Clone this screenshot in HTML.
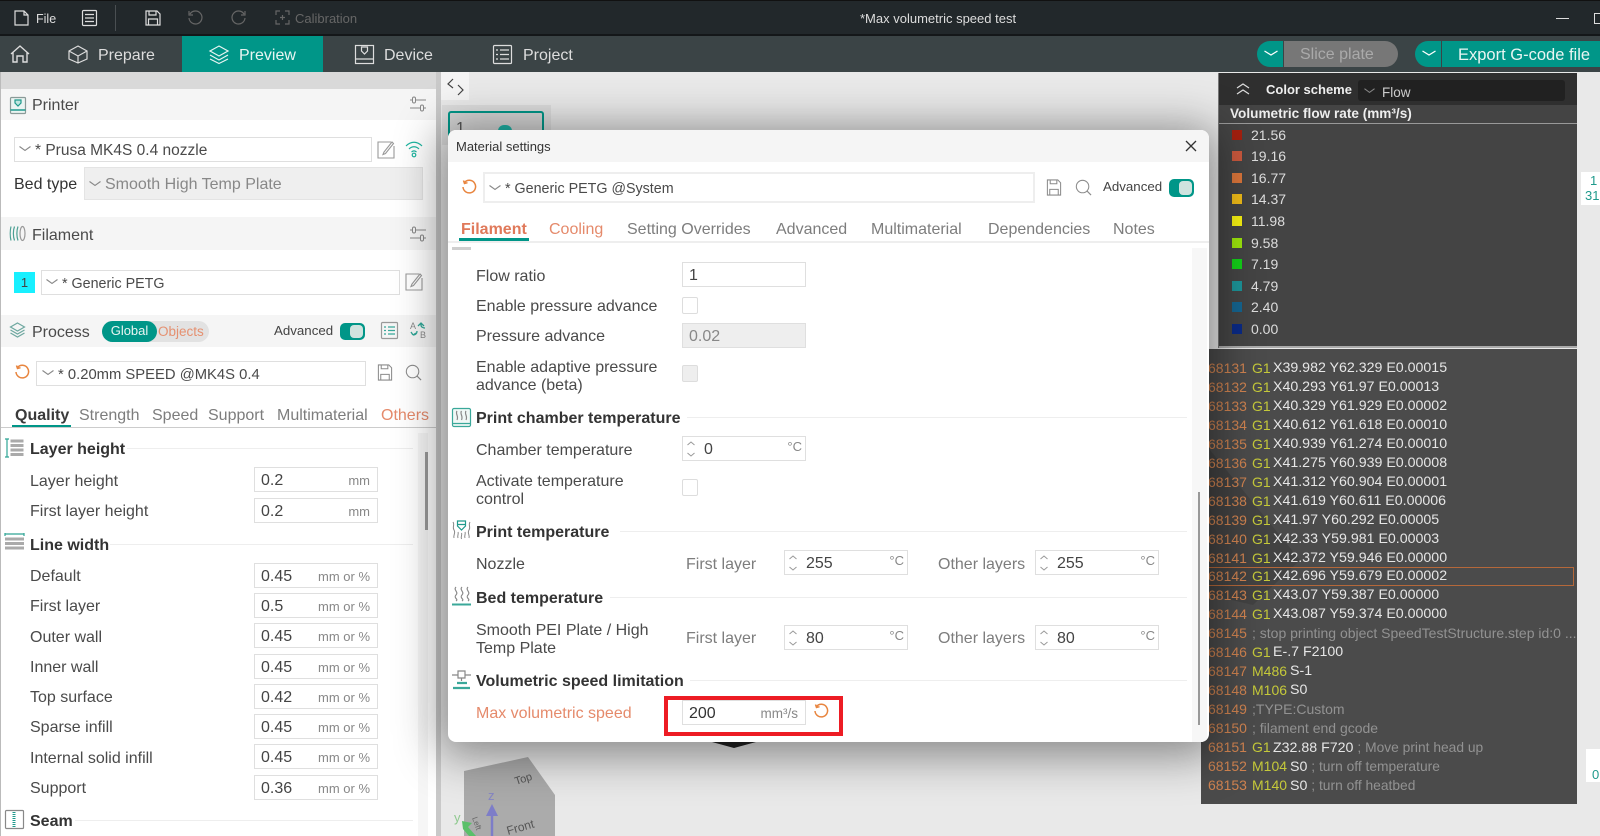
<!DOCTYPE html>
<html><head><meta charset="utf-8"><title>Max volumetric speed test</title>
<style>
html,body{margin:0;padding:0;width:1600px;height:836px;overflow:hidden;background:#e9e9e9;font-family:"Liberation Sans",sans-serif;color:#4a4a4a}
body{filter:blur(.3px)}
div,span,svg{position:absolute}
.t{white-space:nowrap;line-height:20px;font-size:16px;margin-top:1.5px}
.b{font-weight:bold;color:#333;font-size:16px}
.i{border:1px solid #dfdfdf;background:#fff;box-sizing:border-box;height:25px;width:124px}
.v{left:6px;top:3px;line-height:20px;font-size:16px;color:#444}
.u{right:7px;top:3px;line-height:20px;font-size:13px;color:#888;white-space:nowrap}
.d{right:3px;top:0}
.l{height:1px;background:#eee}
.n{left:1208px;color:#d08350}.g{left:1252px;color:#c5c93a}.w{color:#e6e6e6}.c{color:#929292;font-size:13.800px}
.r{font-size:14px;line-height:19px;white-space:nowrap}
.w{font-size:14.200px}
.s{left:1232px;width:10px;height:10px}
.q{left:1251px;color:#ddd;font-size:14px;line-height:20px;margin-top:0}
svg.o{fill:none;stroke:#8b8b8b;stroke-width:1.2;overflow:visible}
</style></head><body>
<svg width="0" height="0" style="left:0;top:0"><defs>
<symbol id="undo" viewBox="0 0 16 16"><path d="M3.500 3.500A6.300 6.300 0 1 1 2 8M2.500 1.500l1 3 3-.8" fill="none" stroke="#e8853f" stroke-width="1.500"/></symbol>
<symbol id="save" viewBox="0 0 16 18"><path d="M1 1h11l3 3v13H1zM4 1v4h7V1M3.500 17v-6h9v6" fill="none" stroke="#8b8b8b" stroke-width="1.100"/></symbol>
<symbol id="srch" viewBox="0 0 18 18"><circle cx="8" cy="8" r="6.600" fill="none" stroke="#8b8b8b" stroke-width="1.100"/><path d="M12.500 12.500l4.500 4.500" stroke="#8b8b8b" stroke-width="1.200"/></symbol>
<symbol id="edit" viewBox="0 0 18 18"><path d="M14 1H1v16h16V5M7 11l-1 2.500L8.500 12.500 16.500 2.500 15 1z" fill="none" stroke="#999" stroke-width="1.100"/></symbol>
<symbol id="sld" viewBox="0 0 16 16"><path d="M0 4h2M6 4h10M0 12h10M14 12h2" stroke="#888" fill="none"/><rect x="2.500" y="1" width="3" height="6" rx="1.500" fill="none" stroke="#888"/><rect x="10.500" y="9" width="3" height="6" rx="1.500" fill="none" stroke="#888"/></symbol>
<symbol id="chv" viewBox="0 0 12 6"><path d="M.5.500l5.500 4 5.500-4" fill="none" stroke="#888" stroke-width="1.100"/></symbol>
<symbol id="spin" viewBox="0 0 10 18"><path d="M1.500 5l3.500-3 3.500 3M1.500 13l3.500 3 3.500-3" fill="none" stroke="#999"/></symbol>
</defs></svg>

<!-- canvas -->
<div style="left:441px;top:72px;width:1159px;height:764px;background:#e9e9e9"></div>
<div style="left:441px;top:72px;width:28px;height:28px;background:#f4f4f4"></div>
<svg class="o" style="left:446px;top:77px;stroke:#444" width="18" height="20"><path d="M7 2L2 7l5 4M12 8l5 5-5 5"/></svg>
<div style="left:442px;top:105px;width:109px;height:40px;background:#dcdcdc"></div>
<div style="left:448px;top:111px;width:96px;height:30px;background:#d5d5d5;border:2px solid #009688;box-sizing:border-box;border-radius:3px"></div>
<div class="t" style="left:456px;top:117px;color:#555">1</div>
<div style="left:498px;top:125px;width:14px;height:8px;background:#1fb5a8;border-radius:6px 6px 0 0"></div>
<svg style="left:1205px;top:445px" width="120" height="170"><path d="M5 5L95 115 48 160 5 150z" fill="#222"/></svg>
<div style="left:712px;top:742px;width:0;height:0;border-left:22px solid transparent;border-right:22px solid transparent;border-top:6px solid #222"></div>
<svg style="left:441px;top:750px" width="130" height="86"><path d="M23 21L87 7 114 45V86H23z" fill="#ababab"/>
<text x="75" y="35" font-size="11" fill="#555" font-family="Liberation Sans" transform="rotate(-18 75 35)">Top</text>
<text x="67" y="85" font-size="12" fill="#555" font-family="Liberation Sans" transform="rotate(-16 67 85)">Front</text>
<text x="47" y="50" font-size="13" fill="#8585c5" font-family="Liberation Sans">z</text>
<text x="13" y="72" font-size="13" fill="#8fc98f" font-family="Liberation Sans">y</text>
<text x="31" y="68" font-size="8" fill="#666" font-family="Liberation Sans" transform="rotate(70 31 68)">Left</text>
<path d="M51 86V58" stroke="#7d7dc8" stroke-width="2.500"/><path d="M45 66l6-12 6 12z" fill="#7d7dc8"/>
<path d="M21 71l10 2-4 4 8 9h-7l-6-7z" fill="#5bc06a"/></svg>
<div style="left:1581px;top:172px;width:19px;height:33px;background:#fff"></div>
<div class="t" style="left:1590px;top:169px;color:#1f9a8c;font-size:13px">1</div>
<div class="t" style="left:1585px;top:184px;color:#1f9a8c;font-size:13px">31</div>
<div style="left:1586px;top:749px;width:14px;height:33px;background:#fff"></div>
<div class="t" style="left:1592px;top:763px;color:#1f9a8c;font-size:13px">0</div>

<!-- color scheme -->
<div style="left:1219px;top:73px;width:358px;height:32px;background:#2f2f2f"></div>
<div style="left:1219px;top:105px;width:358px;height:242px;background:#444"></div>
<div style="left:1219px;top:123px;width:358px;height:1px;background:#999"></div>
<div style="left:1219px;top:346px;width:358px;height:2px;background:#aaa"></div>
<div style="left:1218px;top:73px;width:1px;height:275px;background:#777"></div>
<svg class="o" style="left:1236px;top:83px;stroke:#ddd" width="14" height="12"><path d="M1 5l6-4 6 4M1 11l6-4 6 4"/></svg>
<div class="t" style="left:1266px;top:78px;font-weight:bold;color:#eee;font-size:13px">Color scheme</div>
<div style="left:1358px;top:80px;width:207px;height:21px;background:#212121;border-radius:3px"></div>
<svg style="left:1364px;top:88px" width="11" height="6"><use href="#chv"/></svg>
<div class="t" style="left:1382px;top:81px;color:#ccc;font-size:13.500px">Flow</div>
<div class="t" style="left:1230px;top:102px;font-weight:bold;color:#eee;font-size:13.600px">Volumetric flow rate (mm³/s)</div>
<div class="s" style="top:130px;background:#a3200f"></div><div class="t q" style="top:125px">21.56</div>
<div class="s" style="top:151px;background:#c9583d"></div><div class="t q" style="top:146px">19.16</div>
<div class="s" style="top:173px;background:#d8743a"></div><div class="t q" style="top:168px">16.77</div>
<div class="s" style="top:194px;background:#eeba18"></div><div class="t q" style="top:189px">14.37</div>
<div class="s" style="top:216px;background:#f5f012"></div><div class="t q" style="top:211px">11.98</div>
<div class="s" style="top:238px;background:#9be40c"></div><div class="t q" style="top:233px">9.58</div>
<div class="s" style="top:259px;background:#13cf18"></div><div class="t q" style="top:254px">7.19</div>
<div class="s" style="top:281px;background:#1c9398"></div><div class="t q" style="top:276px">4.79</div>
<div class="s" style="top:302px;background:#15648f"></div><div class="t q" style="top:297px">2.40</div>
<div class="s" style="top:324px;background:#0a2a85"></div><div class="t q" style="top:319px">0.00</div>

<!-- gcode -->
<div style="left:1201px;top:349px;width:376px;height:455px;background:rgba(68,68,68,.96)"></div>
<div style="left:1204px;top:567px;width:370px;height:19px;border:1px solid #b5683a;box-sizing:border-box"></div>
<div class="r n" style="top:359px">68131</div><div class="r g" style="top:359px">G1</div><div class="r w" style="left:1273px;top:359px">X39.982 Y62.329 E0.00015</div>
<div class="r n" style="top:378px">68132</div><div class="r g" style="top:378px">G1</div><div class="r w" style="left:1273px;top:378px">X40.293 Y61.97 E0.00013</div>
<div class="r n" style="top:397px">68133</div><div class="r g" style="top:397px">G1</div><div class="r w" style="left:1273px;top:397px">X40.329 Y61.929 E0.00002</div>
<div class="r n" style="top:416px">68134</div><div class="r g" style="top:416px">G1</div><div class="r w" style="left:1273px;top:416px">X40.612 Y61.618 E0.00010</div>
<div class="r n" style="top:435px">68135</div><div class="r g" style="top:435px">G1</div><div class="r w" style="left:1273px;top:435px">X40.939 Y61.274 E0.00010</div>
<div class="r n" style="top:454px">68136</div><div class="r g" style="top:454px">G1</div><div class="r w" style="left:1273px;top:454px">X41.275 Y60.939 E0.00008</div>
<div class="r n" style="top:473px">68137</div><div class="r g" style="top:473px">G1</div><div class="r w" style="left:1273px;top:473px">X41.312 Y60.904 E0.00001</div>
<div class="r n" style="top:492px">68138</div><div class="r g" style="top:492px">G1</div><div class="r w" style="left:1273px;top:492px">X41.619 Y60.611 E0.00006</div>
<div class="r n" style="top:511px">68139</div><div class="r g" style="top:511px">G1</div><div class="r w" style="left:1273px;top:511px">X41.97 Y60.292 E0.00005</div>
<div class="r n" style="top:530px">68140</div><div class="r g" style="top:530px">G1</div><div class="r w" style="left:1273px;top:530px">X42.33 Y59.981 E0.00003</div>
<div class="r n" style="top:549px">68141</div><div class="r g" style="top:549px">G1</div><div class="r w" style="left:1273px;top:549px">X42.372 Y59.946 E0.00000</div>
<div class="r n" style="top:567px">68142</div><div class="r g" style="top:567px">G1</div><div class="r w" style="left:1273px;top:567px">X42.696 Y59.679 E0.00002</div>
<div class="r n" style="top:586px">68143</div><div class="r g" style="top:586px">G1</div><div class="r w" style="left:1273px;top:586px">X43.07 Y59.387 E0.00000</div>
<div class="r n" style="top:605px">68144</div><div class="r g" style="top:605px">G1</div><div class="r w" style="left:1273px;top:605px">X43.087 Y59.374 E0.00000</div>
<div class="r n" style="top:624px">68145</div><div class="r c" style="left:1252px;top:624px">; stop printing object SpeedTestStructure.step id:0 ...</div>
<div class="r n" style="top:643px">68146</div><div class="r g" style="top:643px">G1</div><div class="r w" style="left:1273px;top:643px">E-.7 F2100</div>
<div class="r n" style="top:662px">68147</div><div class="r g" style="top:662px">M486</div><div class="r w" style="left:1290px;top:662px">S-1</div>
<div class="r n" style="top:681px">68148</div><div class="r g" style="top:681px">M106</div><div class="r w" style="left:1290px;top:681px">S0</div>
<div class="r n" style="top:700px">68149</div><div class="r c" style="left:1252px;top:700px">;TYPE:Custom</div>
<div class="r n" style="top:719px">68150</div><div class="r c" style="left:1252px;top:719px">; filament end gcode</div>
<div class="r n" style="top:738px">68151</div><div class="r g" style="top:738px">G1</div><div class="r w" style="left:1273px;top:738px">Z32.88 F720 <span class="c" style="position:static">; Move print head up</span></div>
<div class="r n" style="top:757px">68152</div><div class="r g" style="top:757px">M104</div><div class="r w" style="left:1290px;top:757px">S0 <span class="c" style="position:static">; turn off temperature</span></div>
<div class="r n" style="top:776px">68153</div><div class="r g" style="top:776px">M140</div><div class="r w" style="left:1290px;top:776px">S0 <span class="c" style="position:static">; turn off heatbed</span></div>

<!-- left panel -->
<div style="left:0;top:72px;width:436px;height:764px;background:#fff"></div>
<div style="left:436px;top:72px;width:5px;height:764px;background:#c9c9c9"></div>
<div style="left:0;top:72px;width:1px;height:764px;background:#bbb"></div>
<div style="left:1px;top:72px;width:435px;height:17px;background:#d9d9d9"></div>
<div style="left:1px;top:89px;width:435px;height:31px;background:#f5f5f5"></div>
<svg class="o" style="left:10px;top:97px;stroke:#8a9a98" width="16" height="17"><rect x=".5" y=".5" width="15" height="16" rx="1" fill="#eaf4f2"/><path d="M5 3h6v3l-3 3-3-3z" stroke="#1f9a8c" fill="#bfe6e0"/><path d="M.5 13h15" stroke="#1f9a8c" stroke-width="1.500"/></svg>
<div class="t" style="left:32px;top:94px">Printer</div>
<svg style="left:410px;top:96px" width="16" height="16"><use href="#sld"/></svg>
<div class="i" style="left:14px;top:137px;width:358px"></div>
<svg style="left:19px;top:146px" width="12" height="6"><use href="#chv"/></svg>
<div class="t" style="left:35px;top:139px;font-size:15.500px">* Prusa MK4S 0.4 nozzle</div>
<svg style="left:377px;top:141px" width="18" height="18"><use href="#edit"/></svg>
<svg class="o" style="left:405px;top:141px;stroke:#1fb5a0" width="18" height="17"><path d="M1 5c5-5 11-5 16 0M4 8c3-3 7-3 10 0M6.500 11c2-1.500 3-1.500 5 0"/><circle cx="9" cy="14" r="1.800"/></svg>
<div class="t" style="left:14px;top:173px;color:#333">Bed type</div>
<div style="left:84px;top:167px;width:339px;height:33px;background:#efefef;border:1px solid #e4e4e4;box-sizing:border-box"></div>
<svg style="left:89px;top:181px" width="12" height="6"><use href="#chv"/></svg>
<div class="t" style="left:105px;top:173px;color:#888">Smooth High Temp Plate</div>
<div style="left:1px;top:217px;width:435px;height:33px;background:#f5f5f5"></div>
<svg class="o" style="left:10px;top:225px;stroke:#4b9f93" width="16" height="17"><path d="M1 1.500c-1 4-1 10 0 14M4.500 1.500c-1.500 4-1.500 10 0 14M8 1.500c-1.500 4-1.500 10 0 14" /><ellipse cx="12.500" cy="8.500" rx="2.500" ry="7" stroke="#999"/></svg>
<div class="t" style="left:32px;top:224px">Filament</div>
<svg style="left:410px;top:226px" width="16" height="16"><use href="#sld"/></svg>
<div style="left:14px;top:272px;width:21px;height:21px;background:#18f0ff;text-align:center;line-height:21px;font-size:13px;color:#444">1</div>
<div class="i" style="left:41px;top:270px;width:359px"></div>
<svg style="left:46px;top:279px" width="12" height="6"><use href="#chv"/></svg>
<div class="t" style="left:62px;top:272px;font-size:14.300px">* Generic PETG</div>
<svg style="left:405px;top:273px" width="18" height="18"><use href="#edit"/></svg>
<div style="left:1px;top:315px;width:435px;height:32px;background:#f5f5f5"></div>
<svg class="o" style="left:9px;top:322px;stroke:#6fa8a0" width="17" height="15"><path d="M8.500 1l7 4-7 4-7-4zM1.500 8l7 4 7-4M1.500 11l7 4 7-4"/></svg>
<div class="t" style="left:32px;top:321px">Process</div>
<div style="left:102px;top:321px;width:107px;height:21px;background:#e2e2e2;border-radius:11px"></div>
<div style="left:102px;top:321px;width:55px;height:21px;background:#009688;border-radius:11px;color:#e8f5f2;text-align:center;font-size:13px;line-height:20px">Global</div>
<div class="t" style="left:158px;top:320px;color:#e59070;font-size:13.500px">Objects</div>
<div class="t" style="left:274px;top:319px;font-size:13.300px;color:#444">Advanced</div>
<div style="left:340px;top:323px;width:25px;height:17px;background:#009688;border-radius:5px"></div>
<div style="left:350px;top:325px;width:13px;height:13px;background:#cfe3df;border-radius:4px"></div>
<svg class="o" style="left:381px;top:322px;stroke:#999" width="17" height="17"><rect x=".5" y=".5" width="16" height="16" rx="1"/><path d="M3 5h2M7 5h7M3 8.500h2M7 8.500h7M3 12h2M7 12h7" stroke="#3aa89a"/></svg>
<svg style="left:410px;top:321px" width="17" height="18"><text x="0" y="8" font-size="9" fill="#888" font-family="Liberation Sans">A</text><text x="10" y="17" font-size="9" fill="#888" font-family="Liberation Sans">B</text><path d="M8 5l3-3 3 3M11 2v2c0 2 2 3 4 3M1 11l2 3M3 14l3-2M3 14c3 0 4-2 4-4" fill="none" stroke="#2ea595" stroke-width="1.300"/></svg>
<svg style="left:14px;top:364px" width="16" height="16"><use href="#undo"/></svg>
<div class="i" style="left:36px;top:361px;width:330px"></div>
<svg style="left:42px;top:370px" width="12" height="6"><use href="#chv"/></svg>
<div class="t" style="left:58px;top:363px;font-size:14.800px">* 0.20mm SPEED @MK4S 0.4</div>
<svg style="left:377px;top:364px" width="16" height="17"><use href="#save"/></svg>
<svg style="left:405px;top:364px" width="17" height="17"><use href="#srch"/></svg>
<div class="t" style="left:15px;top:404px;font-weight:bold;color:#3a3a3a">Quality</div>
<div class="t" style="left:79px;top:404px;color:#7d7d7d">Strength</div>
<div class="t" style="left:152px;top:404px;color:#7d7d7d">Speed</div>
<div class="t" style="left:208px;top:404px;color:#7d7d7d">Support</div>
<div class="t" style="left:277px;top:404px;color:#7d7d7d">Multimaterial</div>
<div class="t" style="left:381px;top:404px;color:#e58a6b">Others</div>
<div style="left:1px;top:427px;width:435px;height:1px;background:#ccc"></div>
<div style="left:12px;top:425px;width:59px;height:2px;background:#009688"></div>
<div style="left:418px;top:433px;width:10px;height:403px;background:#f6f6f6"></div>
<div style="left:425px;top:452px;width:3px;height:78px;background:#9a9a9a"></div>

<svg class="o" style="left:5px;top:438px" width="20" height="20"><path d="M2 1v18M0 1h4M0 19h4" stroke="#2ea595"/><rect x="5" y="1" width="14" height="18" fill="#fff" stroke="none"/><path d="M5.500 3h13M5.500 7.500h13M5.500 12h13M5.500 16.500h13" stroke="#aaa" stroke-width="3"/></svg>
<div class="t b" style="left:30px;top:438px">Layer height</div><div class="l" style="left:127px;top:448px;width:286px"></div>
<div class="t" style="left:30px;top:470px">Layer height</div><div class="i" style="left:254px;top:467px"><span class="v">0.2</span><span class="u">mm</span></div>
<div class="t" style="left:30px;top:500px">First layer height</div><div class="i" style="left:254px;top:498px"><span class="v">0.2</span><span class="u">mm</span></div>
<svg class="o" style="left:5px;top:533px" width="20" height="20"><path d="M0 1h19M0 0v3M19 0v3" stroke="#2ea595" stroke-width="1.200"/><path d="M0 6h19M0 10.500h19M0 15h19" stroke="#aaa" stroke-width="3"/></svg>
<div class="t b" style="left:30px;top:534px">Line width</div><div class="l" style="left:110px;top:544px;width:303px"></div>
<div class="t" style="left:30px;top:565px">Default</div><div class="i" style="left:254px;top:563px"><span class="v">0.45</span><span class="u">mm or %</span></div>
<div class="t" style="left:30px;top:595px">First layer</div><div class="i" style="left:254px;top:593px"><span class="v">0.5</span><span class="u">mm or %</span></div>
<div class="t" style="left:30px;top:626px">Outer wall</div><div class="i" style="left:254px;top:623px"><span class="v">0.45</span><span class="u">mm or %</span></div>
<div class="t" style="left:30px;top:656px">Inner wall</div><div class="i" style="left:254px;top:654px"><span class="v">0.45</span><span class="u">mm or %</span></div>
<div class="t" style="left:30px;top:686px">Top surface</div><div class="i" style="left:254px;top:684px"><span class="v">0.42</span><span class="u">mm or %</span></div>
<div class="t" style="left:30px;top:716px">Sparse infill</div><div class="i" style="left:254px;top:714px"><span class="v">0.45</span><span class="u">mm or %</span></div>
<div class="t" style="left:30px;top:747px">Internal solid infill</div><div class="i" style="left:254px;top:744px"><span class="v">0.45</span><span class="u">mm or %</span></div>
<div class="t" style="left:30px;top:777px">Support</div><div class="i" style="left:254px;top:775px"><span class="v">0.36</span><span class="u">mm or %</span></div>
<svg class="o" style="left:5px;top:810px;stroke:#888" width="19" height="19"><rect x=".5" y=".5" width="18" height="18" rx="1"/><path d="M9 2v15" stroke="#1f9a8c" stroke-width="3" stroke-dasharray="1 1"/></svg>
<div class="t b" style="left:30px;top:810px">Seam</div><div class="l" style="left:75px;top:820px;width:338px"></div>

<!-- dialog -->
<div style="left:448px;top:130px;width:761px;height:612px;background:#fff;border-radius:8px;box-shadow:0 6px 45px 8px rgba(0,0,0,.42);overflow:hidden">
<div style="left:0;top:0;width:761px;height:32px;background:#f5f5f5"></div>
<div style="left:0;top:111px;width:761px;height:2px;background:#eee"></div>
<div style="left:744px;top:118px;width:15px;height:494px;background:#f7f7f7"></div>
<div style="left:750px;top:362px;width:2px;height:233px;background:#999"></div>
</div>
<div class="t" style="left:456px;top:135.500px;font-size:13px;color:#333">Material settings</div>
<svg style="left:1185px;top:140px" width="12" height="12"><path d="M1 1l10 10M11 1L1 11" stroke="#333" stroke-width="1.300"/></svg>
<svg style="left:461px;top:179px" width="16" height="16"><use href="#undo"/></svg>
<div class="i" style="left:483px;top:172px;width:552px;height:31px;border-width:2px;border-color:#eee"></div>
<svg style="left:489px;top:185px" width="12" height="6"><use href="#chv"/></svg>
<div class="t" style="left:505px;top:177px;font-size:14.300px">* Generic PETG @System</div>
<svg style="left:1046px;top:179px" width="16" height="17"><use href="#save"/></svg>
<svg style="left:1075px;top:179px" width="17" height="17"><use href="#srch"/></svg>
<div class="t" style="left:1103px;top:175.500px;font-size:13.300px;color:#444">Advanced</div>
<div style="left:1169px;top:179px;width:25px;height:18px;background:#009688;border-radius:5px"></div>
<div style="left:1179px;top:181px;width:13px;height:14px;background:#cfe3df;border-radius:4px"></div>
<div class="t" style="left:461px;top:218px;font-weight:bold;color:#e0795a">Filament</div>
<div class="t" style="left:549px;top:218px;color:#e58a6b">Cooling</div>
<div class="t" style="left:627px;top:218px;color:#7d7d7d">Setting Overrides</div>
<div class="t" style="left:776px;top:218px;color:#7d7d7d">Advanced</div>
<div class="t" style="left:871px;top:218px;color:#7d7d7d">Multimaterial</div>
<div class="t" style="left:988px;top:218px;color:#7d7d7d">Dependencies</div>
<div class="t" style="left:1113px;top:218px;color:#7d7d7d">Notes</div>
<div style="left:459px;top:238px;width:70px;height:3px;background:#009688"></div>
<div style="left:452px;top:247px;width:19px;height:3px;background:#cfcfcf"></div>

<div class="t" style="left:476px;top:265px">Flow ratio</div><div class="i" style="left:682px;top:262px"><span class="v">1</span></div>
<div class="t" style="left:476px;top:295px">Enable pressure advance</div>
<div style="left:682px;top:297px;width:16px;height:17px;border:1px solid #ddd;box-sizing:border-box;border-radius:2px"></div>
<div class="t" style="left:476px;top:325px">Pressure advance</div><div class="i" style="left:682px;top:323px;background:#eee"><span class="v" style="color:#888">0.02</span></div>
<div class="t" style="left:476px;top:356px">Enable adaptive pressure</div><div class="t" style="left:476px;top:374px">advance (beta)</div>
<div style="left:682px;top:365px;width:16px;height:17px;border:1px solid #ddd;box-sizing:border-box;border-radius:2px;background:#eee"></div>

<svg class="o" style="left:452px;top:408px;stroke:#3aa89a" width="19" height="19"><rect x=".5" y=".5" width="18" height="18" rx="1.500" fill="#f0f8f6"/><path d="M5 3c-2 3 2 5 0 9M9.500 3c-2 3 2 5 0 9M14 3c-2 3 2 5 0 9" stroke="#888"/><path d="M.5 15.500h18"/></svg>
<div class="t b" style="left:476px;top:407px">Print chamber temperature</div><div class="l" style="left:687px;top:417px;width:500px"></div>
<div class="t" style="left:476px;top:439px">Chamber temperature</div><div class="i" style="left:682px;top:436px"><svg style="left:3px;top:3px" width="10" height="18"><use href="#spin"/></svg><span class="v" style="left:21px">0</span><span class="u d">°C</span></div>
<div class="t" style="left:476px;top:470px">Activate temperature</div><div class="t" style="left:476px;top:488px">control</div>
<div style="left:682px;top:479px;width:16px;height:17px;border:1px solid #ddd;box-sizing:border-box;border-radius:2px"></div>

<svg class="o" style="left:452px;top:520px;stroke:#888" width="19" height="20"><path d="M5.500 1h8v5l-4 4-4-4zM5.500 4.500h8" stroke="#1f9a8c"/><path d="M1 2c2 3-1 5 1 8s-1 5 0 8M18 2c-2 3 1 5-1 8s1 5 0 8M6 12c1 2-1 3 0 6M9.500 13c1 2-1 3 0 6M13 12c1 2-1 3 0 6" stroke-width="1"/></svg>
<div class="t b" style="left:476px;top:521px">Print temperature</div><div class="l" style="left:620px;top:531px;width:567px"></div>
<div class="t" style="left:476px;top:553px">Nozzle</div>
<div class="t" style="left:686px;top:553px;color:#7d7d7d">First layer</div>
<div class="i" style="left:784px;top:550px"><svg style="left:3px;top:3px" width="10" height="18"><use href="#spin"/></svg><span class="v" style="left:21px">255</span><span class="u d">°C</span></div>
<div class="t" style="left:938px;top:553px;color:#7d7d7d">Other layers</div>
<div class="i" style="left:1035px;top:550px"><svg style="left:3px;top:3px" width="10" height="18"><use href="#spin"/></svg><span class="v" style="left:21px">255</span><span class="u d">°C</span></div>

<svg class="o" style="left:452px;top:586px;stroke:#888" width="19" height="20"><path d="M4 1c-3 3 3 5 0 8s3 4 0 6M10 1c-3 3 3 5 0 8s3 4 0 6M16 1c-3 3 3 5 0 8s3 4 0 6"/><path d="M0 18.500h19" stroke="#3aa89a" stroke-width="2"/></svg>
<div class="t b" style="left:476px;top:587px">Bed temperature</div><div class="l" style="left:610px;top:597px;width:577px"></div>
<div class="t" style="left:476px;top:619px">Smooth PEI Plate / High</div><div class="t" style="left:476px;top:637px">Temp Plate</div>
<div class="t" style="left:686px;top:627px;color:#7d7d7d">First layer</div>
<div class="i" style="left:784px;top:625px"><svg style="left:3px;top:3px" width="10" height="18"><use href="#spin"/></svg><span class="v" style="left:21px">80</span><span class="u d">°C</span></div>
<div class="t" style="left:938px;top:627px;color:#7d7d7d">Other layers</div>
<div class="i" style="left:1035px;top:625px"><svg style="left:3px;top:3px" width="10" height="18"><use href="#spin"/></svg><span class="v" style="left:21px">80</span><span class="u d">°C</span></div>

<svg class="o" style="left:452px;top:670px;stroke:#888" width="19" height="20"><path d="M6 1h7v7H6zM0 5h6M13 5h6M9.500 8v3"/><path d="M5 13h10M1 18h17" stroke="#3aa89a" stroke-width="2.200"/></svg>
<div class="t b" style="left:476px;top:670px">Volumetric speed limitation</div><div class="l" style="left:690px;top:680px;width:497px"></div>
<div class="t" style="left:476px;top:702px;color:#e58a6b">Max volumetric speed</div>
<div class="i" style="left:682px;top:700px"><span class="v" style="color:#333">200</span><span class="u" style="font-size:13.500px">mm³/s</span></div>
<svg style="left:813px;top:703px" width="16" height="16"><use href="#undo"/></svg>
<div style="left:664px;top:696px;width:179px;height:40px;border:4px solid #ed1c24;box-sizing:border-box"></div>

<!-- top bar -->
<div style="left:0;top:0;width:1600px;height:35px;background:#22282b;border-top:1px solid #111;box-sizing:border-box"></div>
<div style="left:0;top:34px;width:1600px;height:2px;background:#141719"></div>
<svg class="o" style="left:14px;top:10px;stroke:#ddd" width="16" height="16"><path d="M1 1h9l4 4v10H1zM10 1v4h4"/></svg>
<div class="t" style="left:36px;top:7px;color:#ddd;font-size:12.500px">File</div>
<svg class="o" style="left:82px;top:10px;stroke:#ddd" width="15" height="16"><rect x=".5" y=".5" width="14" height="15" rx="1"/><path d="M3 4.500h9M3 8h9M3 11.500h9"/></svg>
<div style="left:115px;top:5px;width:1px;height:26px;background:#4a4f52"></div>
<svg class="o" style="left:145px;top:10px;stroke:#ddd" width="16" height="16"><path d="M1 1h11l3 3v11H1zM4 1v4h7V1M3.500 15v-6h9v6"/></svg>
<svg class="o" style="left:187px;top:10px;stroke:#666" width="16" height="16"><path d="M3 4a6.500 6.500 0 1 1-1 4M2 1v4h4"/></svg>
<svg class="o" style="left:231px;top:10px;stroke:#666" width="16" height="16"><path d="M13 4a6.500 6.500 0 1 0 1 4M14 1v4h-4"/></svg>
<svg class="o" style="left:275px;top:10px;stroke:#666" width="15" height="15"><path d="M1 5V1h4M10 1h4v4M14 10v4h-4M5 14H1v-4M5 7.500h5M7.500 5v5"/></svg>
<div class="t" style="left:295px;top:7px;color:#666;font-size:13px">Calibration</div>
<div class="t" style="left:860px;top:7px;color:#ddd;font-size:13px">*Max volumetric speed test</div>
<div style="left:1556px;top:18px;width:13px;height:1px;background:#ddd"></div>
<div style="left:1594px;top:13px;width:6px;height:11px;border:1px solid #ddd;border-right:0;box-sizing:border-box"></div>

<!-- nav -->
<div style="left:0;top:36px;width:1600px;height:36px;background:#3b4446"></div>
<div style="left:182px;top:36px;width:141px;height:36px;background:#009688"></div>
<svg class="o" style="left:10px;top:45px;stroke:#ddd;stroke-width:1.400" width="20" height="18"><path d="M1 9l9-8 9 8M3 7v10h4v-6h6v6h4V7"/></svg>
<svg class="o" style="left:68px;top:45px;stroke:#ddd" width="20" height="19"><path d="M10 1l9 5v8l-9 4-9-4V6zM1 6l9 5 9-5M10 11v7"/></svg>
<div class="t" style="left:98px;top:44px;color:#ddd">Prepare</div>
<svg class="o" style="left:209px;top:45px;stroke:#e8f5f2" width="20" height="19"><path d="M10 1l9 5-9 5-9-5zM1 10l9 5 9-5M1 14l9 4.500 9-4.500"/></svg>
<div class="t" style="left:239px;top:44px;color:#e8f5f2">Preview</div>
<svg class="o" style="left:355px;top:45px;stroke:#ddd" width="19" height="19"><rect x=".5" y=".5" width="18" height="18"/><path d="M.5 14h18M6.500 2h6v4l-3 3-3-3z"/></svg>
<div class="t" style="left:384px;top:44px;color:#ddd">Device</div>
<svg class="o" style="left:493px;top:45px;stroke:#ddd" width="19" height="19"><rect x=".5" y=".5" width="18" height="18" rx="1"/><path d="M3 5h2M7 5h9M3 9.500h2M7 9.500h9M3 14h2M7 14h9"/></svg>
<div class="t" style="left:523px;top:44px;color:#ddd">Project</div>

<div style="left:1257px;top:41px;width:26px;height:26px;background:#009688;border-radius:13px 0 0 13px"></div>
<svg style="left:1264px;top:50px" width="14" height="6"><path d="M.5 1l6.500 4 6.500-4" fill="none" stroke="#fff" stroke-width="1.300"/></svg>
<div style="left:1284px;top:41px;width:114px;height:26px;background:#777;border-radius:0 13px 13px 0"></div>
<div class="t" style="left:1300px;top:43px;color:#aaa;font-size:16px">Slice plate</div>
<div style="left:1415px;top:41px;width:26px;height:26px;background:#009688;border-radius:13px 0 0 13px"></div>
<svg style="left:1422px;top:50px" width="14" height="6"><path d="M.5 1l6.500 4 6.500-4" fill="none" stroke="#fff" stroke-width="1.300"/></svg>
<div style="left:1442px;top:41px;width:158px;height:26px;background:#009688"></div>
<div class="t" style="left:1458px;top:43px;color:#e8f5f2;font-size:16.500px">Export G-code file</div>
</body></html>
